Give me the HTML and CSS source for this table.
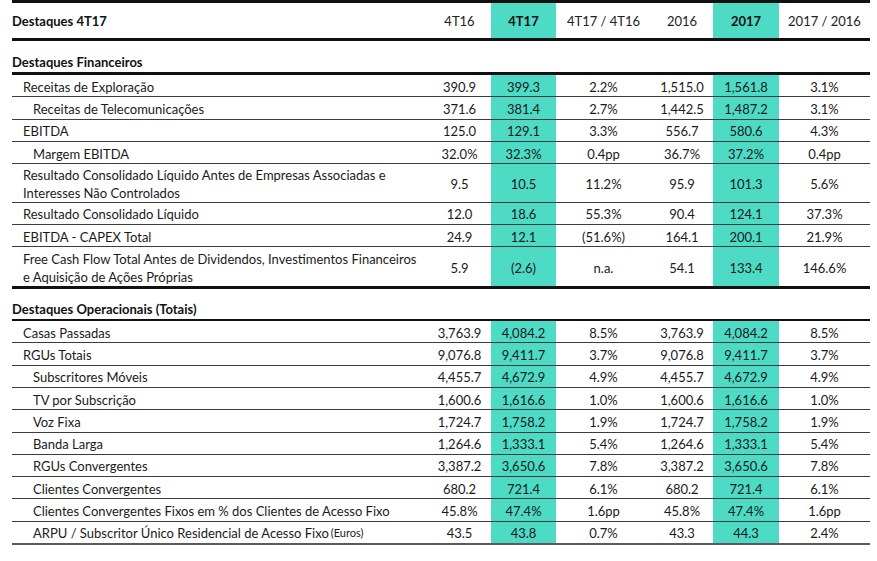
FILE: index.html
```html
<!DOCTYPE html>
<html lang="pt">
<head>
<meta charset="utf-8">
<title>Destaques 4T17</title>
<link rel="stylesheet" href="styles.css">
</head>
<body>
<div class="kpi">
  <div class="row head">
    <div class="cell label">Destaques 4T17</div>
    <div class="cell">4T16</div>
    <div class="cell hi strong">4T17</div>
    <div class="cell">4T17 / 4T16</div>
    <div class="cell">2016</div>
    <div class="cell hi strong">2017</div>
    <div class="cell">2017 / 2016</div>
  </div>

  <div class="section first">Destaques Financeiros</div>

  <div class="row data">
    <div class="cell label l1">Receitas de Exploração</div>
    <div class="cell">390.9</div><div class="cell hi">399.3</div><div class="cell">2.2%</div><div class="cell">1,515.0</div><div class="cell hi">1,561.8</div><div class="cell">3.1%</div>
  </div>
  <div class="row data">
    <div class="cell label l2">Receitas de Telecomunicações</div>
    <div class="cell">371.6</div><div class="cell hi">381.4</div><div class="cell">2.7%</div><div class="cell">1,442.5</div><div class="cell hi">1,487.2</div><div class="cell">3.1%</div>
  </div>
  <div class="row data">
    <div class="cell label l1">EBITDA</div>
    <div class="cell">125.0</div><div class="cell hi">129.1</div><div class="cell">3.3%</div><div class="cell">556.7</div><div class="cell hi">580.6</div><div class="cell">4.3%</div>
  </div>
  <div class="row data">
    <div class="cell label l2">Margem EBITDA</div>
    <div class="cell">32.0%</div><div class="cell hi">32.3%</div><div class="cell">0.4pp</div><div class="cell">36.7%</div><div class="cell hi">37.2%</div><div class="cell">0.4pp</div>
  </div>
  <div class="row data tall">
    <div class="cell label l1">Resultado Consolidado Líquido Antes de Empresas Associadas e<br>Interesses Não Controlados</div>
    <div class="cell">9.5</div><div class="cell hi">10.5</div><div class="cell">11.2%</div><div class="cell">95.9</div><div class="cell hi">101.3</div><div class="cell">5.6%</div>
  </div>
  <div class="row data">
    <div class="cell label l1">Resultado Consolidado Líquido</div>
    <div class="cell">12.0</div><div class="cell hi">18.6</div><div class="cell">55.3%</div><div class="cell">90.4</div><div class="cell hi">124.1</div><div class="cell">37.3%</div>
  </div>
  <div class="row data">
    <div class="cell label l1">EBITDA - CAPEX Total</div>
    <div class="cell">24.9</div><div class="cell hi">12.1</div><div class="cell">(51.6%)</div><div class="cell">164.1</div><div class="cell hi">200.1</div><div class="cell">21.9%</div>
  </div>
  <div class="row data tall end">
    <div class="cell label l1">Free Cash Flow Total Antes de Dividendos, Investimentos Financeiros<br>e Aquisição de Ações Próprias</div>
    <div class="cell">5.9</div><div class="cell hi">(2.6)</div><div class="cell">n.a.</div><div class="cell">54.1</div><div class="cell hi">133.4</div><div class="cell">146.6%</div>
  </div>

  <div class="section second">Destaques Operacionais (Totais)</div>

  <div class="row data">
    <div class="cell label l1">Casas Passadas</div>
    <div class="cell">3,763.9</div><div class="cell hi">4,084.2</div><div class="cell">8.5%</div><div class="cell">3,763.9</div><div class="cell hi">4,084.2</div><div class="cell">8.5%</div>
  </div>
  <div class="row data">
    <div class="cell label l1">RGUs Totais</div>
    <div class="cell">9,076.8</div><div class="cell hi">9,411.7</div><div class="cell">3.7%</div><div class="cell">9,076.8</div><div class="cell hi">9,411.7</div><div class="cell">3.7%</div>
  </div>
  <div class="row data">
    <div class="cell label l2">Subscritores Móveis</div>
    <div class="cell">4,455.7</div><div class="cell hi">4,672.9</div><div class="cell">4.9%</div><div class="cell">4,455.7</div><div class="cell hi">4,672.9</div><div class="cell">4.9%</div>
  </div>
  <div class="row data">
    <div class="cell label l2">TV por Subscrição</div>
    <div class="cell">1,600.6</div><div class="cell hi">1,616.6</div><div class="cell">1.0%</div><div class="cell">1,600.6</div><div class="cell hi">1,616.6</div><div class="cell">1.0%</div>
  </div>
  <div class="row data">
    <div class="cell label l2">Voz Fixa</div>
    <div class="cell">1,724.7</div><div class="cell hi">1,758.2</div><div class="cell">1.9%</div><div class="cell">1,724.7</div><div class="cell hi">1,758.2</div><div class="cell">1.9%</div>
  </div>
  <div class="row data">
    <div class="cell label l2">Banda Larga</div>
    <div class="cell">1,264.6</div><div class="cell hi">1,333.1</div><div class="cell">5.4%</div><div class="cell">1,264.6</div><div class="cell hi">1,333.1</div><div class="cell">5.4%</div>
  </div>
  <div class="row data">
    <div class="cell label l2">RGUs Convergentes</div>
    <div class="cell">3,387.2</div><div class="cell hi">3,650.6</div><div class="cell">7.8%</div><div class="cell">3,387.2</div><div class="cell hi">3,650.6</div><div class="cell">7.8%</div>
  </div>
  <div class="row data">
    <div class="cell label l2">Clientes Convergentes</div>
    <div class="cell">680.2</div><div class="cell hi">721.4</div><div class="cell">6.1%</div><div class="cell">680.2</div><div class="cell hi">721.4</div><div class="cell">6.1%</div>
  </div>
  <div class="row data">
    <div class="cell label l2">Clientes Convergentes Fixos em % dos Clientes de Acesso Fixo</div>
    <div class="cell">45.8%</div><div class="cell hi">47.4%</div><div class="cell">1.6pp</div><div class="cell">45.8%</div><div class="cell hi">47.4%</div><div class="cell">1.6pp</div>
  </div>
  <div class="row data final">
    <div class="cell label l2">ARPU / Subscritor Único Residencial de Acesso Fixo<span class="unit">(Euros)</span></div>
    <div class="cell">43.5</div><div class="cell hi">43.8</div><div class="cell">0.7%</div><div class="cell">43.3</div><div class="cell hi">44.3</div><div class="cell">2.4%</div>
  </div>
</div>
</body>
</html>
```

FILE: styles.css
```css
html, body {
  margin: 0;
  padding: 0;
  background: #ffffff;
}

body {
  font-family: "Lato", "Liberation Sans", sans-serif;
  font-size: 13px;
  color: #1a1a1a;
}

.kpi {
  margin-left: 12px;
  width: 858px;
}

.row {
  display: grid;
  grid-template-columns: 416px 63px 65px 95px 62px 66px 91px;
  box-sizing: border-box;
}

.cell {
  display: flex;
  align-items: center;
  justify-content: center;
  white-space: nowrap;
  line-height: 16px;
}

.cell.label {
  justify-content: flex-start;
  text-align: left;
}

.head {
  height: 41px;
  border-top: 3px solid #111;
  border-bottom: 3px solid #111;
  color: #222;
}

.head .label,
.head .strong {
  font-weight: 700;
  color: #111;
}

.hi {
  background: #4ddbc6;
}

.section {
  box-sizing: border-box;
  display: flex;
  align-items: flex-end;
  font-weight: 700;
  color: #111;
  line-height: 16px;
  padding-bottom: 2px;
}

.section.first {
  height: 34px;
  border-bottom: 3px solid #111;
}

.section.second {
  height: 32px;
  border-bottom: 2px solid #111;
}

.data {
  height: 22.3px;
  border-bottom: 1px solid #3c3c3c;
}

.data .cell {
  padding-top: 2px;
}

.data.tall {
  height: 38.6px;
}

.data.tall .label {
  line-height: 18px;
}

.data.end {
  height: 41.7px;
  border-bottom: 3px solid #111;
}

.data.final {
  height: 23.3px;
  border-bottom: 2px solid #5a5a5a;
}

.l1 {
  padding-left: 11px;
}

.l2 {
  padding-left: 21px;
}

.unit {
  font-size: 11px;
  margin-left: 2px;
}
```
